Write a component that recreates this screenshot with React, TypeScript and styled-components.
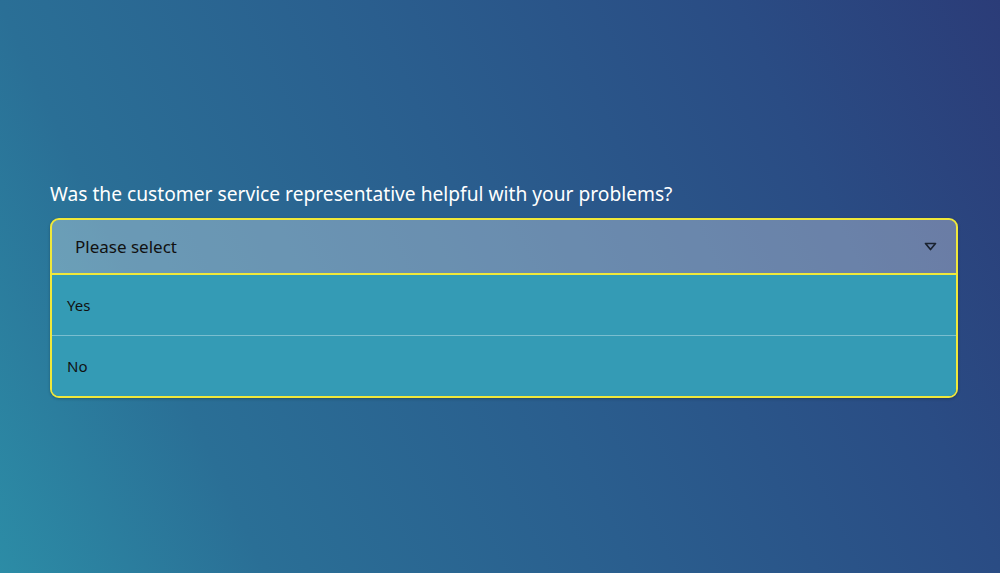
import React from 'react';
import styled, {createGlobalStyle} from 'styled-components';

const GlobalStyle = createGlobalStyle`
    html, body {
        margin:0;
        padding:0;
        height:100%;
    }
    body {
        font-family:"Noto Sans", "Open Sans", sans-serif;
    }
`;

const Page = styled.div`
    width:100%;
    height:573px;
    box-sizing:border-box;
    background:linear-gradient(65deg, #2c8ca6 0%, #2a6f96 21%, #2a5e8e 50%, #2a4c84 79%, #2b3c78 100%);
    padding:182px 42px 0 50px;
`;

const Question = styled.div`
    color:#fff;
    font-size:19.2px;
    line-height:24px;
    margin-bottom:12px;
`;

const Select = styled.div`
    border:2px solid #f0e83a;
    border-radius:9px;
    overflow:hidden;
    box-shadow:0 1px 3px rgba(0,0,0,0.25);
`;

const Header = styled.div`
    display:flex;
    align-items:center;
    justify-content:space-between;
    height:53px;
    padding:0 19px 0 23px;
    background:rgba(255,255,255,0.3);
    border-bottom:2px solid #f0e83a;
    color:#111;
    font-size:17px;
`;

const Option = styled.div<{last?:boolean}>`
    display:flex;
    align-items:center;
    height:60px;
    padding:0 15px;
    background:#349bb5;
    color:#111;
    font-size:15px;
    border-bottom:${({last})=>last ? 'none' : '1px solid rgba(255,255,255,0.35)'};
`;

const Caret = () => (
    <svg width="13" height="9" viewBox="0 0 13 9">
        <path d="M1.5 1.5 H11.5 L6.5 7.5 Z" fill="none" stroke="#1a2330" strokeWidth="1.7" strokeLinejoin="round" />
    </svg>
);

const App:React.FC = () => {
    return <>
        <GlobalStyle />
        <Page>
            <Question>Was the customer service representative helpful with your problems?</Question>
            <Select>
                <Header>
                    <span>Please select</span>
                    <Caret />
                </Header>
                <Option>Yes</Option>
                <Option last>No</Option>
            </Select>
        </Page>
    </>;
}

export default App;
